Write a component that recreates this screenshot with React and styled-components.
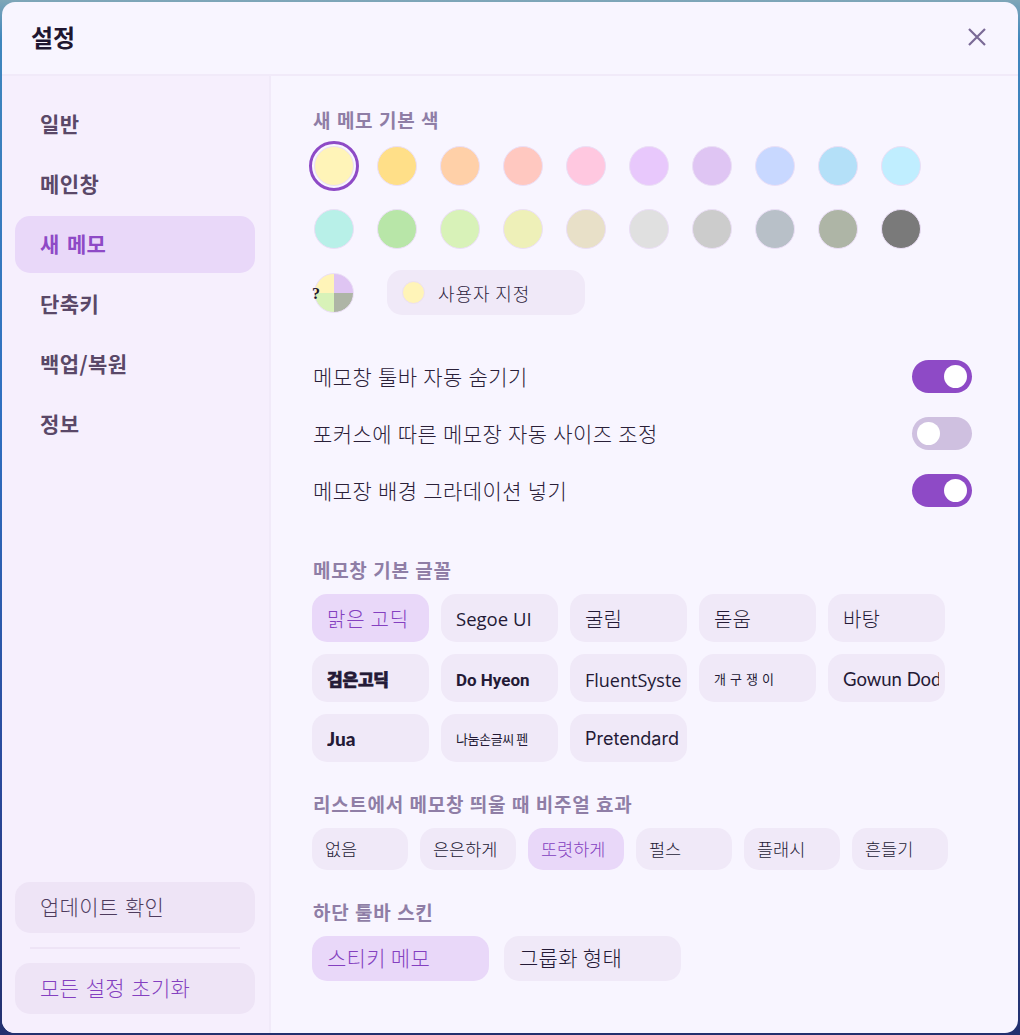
import React from "react";
import styled, { createGlobalStyle } from "styled-components";

const KR = `"Noto Sans CJK KR", "Noto Sans", sans-serif`;

const Global = createGlobalStyle`
  html, body { margin: 0; padding: 0; }
  body {
    height: 1035px;
    overflow: hidden;
    font-family: ${KR};
    background:
      linear-gradient(180deg, #7fa6b8 0, #3f86bd 40px, #2f6fc0 40%, #2a4a9c 75%, #23306e 100%);
  }
  * { box-sizing: border-box; }
`;

const Stage = styled.div`
  height: 1035px;
  padding: 2px;
`;
const Win = styled.div`
  height: 1031px;
  background: #f8f5ff;
  border-radius: 13px;
  display: flex;
  flex-direction: column;
  overflow: hidden;
`;
const Header = styled.header`
  height: 74px;
  flex: none;
  display: flex;
  align-items: center;
  justify-content: space-between;
  padding: 0 32px 3px 29px;
  border-bottom: 2px solid #f1eaf9;
`;
const Title = styled.h1`
  margin: 0;
  font-size: 24px;
  line-height: 32px;
  font-weight: 700;
  color: #1f1630;
`;
const CloseBtn = styled.button`
  border: 0;
  padding: 0;
  background: none;
  width: 18px;
  height: 18px;
  display: block;
  color: #7a6a96;
  & svg { display: block; }
`;
const Body = styled.div`
  flex: 1;
  display: flex;
  min-height: 0;
`;
const Side = styled.aside`
  width: 269px;
  flex: none;
  background: #f6effd;
  border-right: 2px solid #f1eaf9;
  padding: 20px 14px 19px 13px;
  display: flex;
  flex-direction: column;
`;
const Nav = styled.nav`
  display: flex;
  flex-direction: column;
  gap: 3px;
`;
const NavItem = styled.div`
  height: 57px;
  border-radius: 15px;
  padding: 0 25px 4px;
  display: flex;
  align-items: center;
  font-size: 21px;
  font-weight: 700;
  letter-spacing: 0.4px;
  word-spacing: 2px;
  color: ${p => (p.$active ? "#8e4ac6" : "#5a4868")};
  background: ${p => (p.$active ? "#e9d8f9" : "transparent")};
`;
const SideFoot = styled.div`
  margin-top: auto;
  display: flex;
  flex-direction: column;
`;
const SideBtn = styled.div`
  height: 51px;
  border-radius: 15px;
  padding: 0 25px 4px;
  display: flex;
  align-items: center;
  font-size: 21px;
  font-weight: 300;
  letter-spacing: 0.3px;
  word-spacing: 1.5px;
  background: #eee4f6;
  color: ${p => (p.$accent ? "#8440c0" : "#4e3c5e")};
`;
const Divider = styled.div`
  height: 2px;
  margin: 14px 15px;
  background: #eee4f6;
`;
const Main = styled.main`
  flex: 1;
  padding: 31px 0 0 41px;
  min-width: 0;
`;
const Label = styled.div`
  margin-left: 1px;
  font-size: 19px;
  line-height: 26px;
  font-weight: 700;
  color: #8f7ea6;
  letter-spacing: 0.7px;
  word-spacing: 0.7px;
  margin-top: ${p => p.$top || 0}px;
`;
const Palette = styled.div`
  margin: 13px 0 0 2px;
  display: grid;
  grid-template-columns: repeat(10, 40px);
  column-gap: 23px;
  row-gap: 23px;
`;
const Swatch = styled.div`
  width: 40px;
  height: 40px;
  border-radius: 50%;
  border: 1px solid #ebdff6;
  background: ${p => p.$c};
  ${p => p.$sel && `outline: 3px solid #8e4ac6; outline-offset: 2px;`}
`;
const CustomRow = styled.div`
  margin: 21px 0 0 2px;
  height: 45px;
  display: flex;
  align-items: center;
  gap: 33px;
`;
const MixSwatch = styled.div`
  position: relative;
  width: 40px;
  height: 40px;
  border-radius: 50%;
  border: 1px solid #ebdff6;
  background: conic-gradient(#dfc5f3 0 25%, #aeb5a6 0 50%, #d8f2b8 0 75%, #fff4b8 0);
`;
const Question = styled.span`
  position: absolute;
  left: -3px;
  top: 10px;
  font: 700 16px/20px "Liberation Serif", serif;
  color: #1f1630;
`;
const CustomBtn = styled.div`
  width: 198px;
  height: 45px;
  border-radius: 15px;
  background: #f0e9f8;
  display: flex;
  align-items: center;
  gap: 13px;
  padding: 0 15px;
  font-size: 18px;
  font-weight: 300;
  letter-spacing: 0.9px;
  color: #2f2540;
`;
const CustomDot = styled.span`
  width: 23px;
  height: 23px;
  border-radius: 50%;
  background: #fff4b8;
  border: 1px solid #ebdff6;
`;
const Toggles = styled.div`
  margin: 45px 46px 0 1px;
  display: flex;
  flex-direction: column;
  gap: 24px;
`;
const ToggleRow = styled.div`
  height: 33px;
  display: flex;
  align-items: center;
  justify-content: space-between;
`;
const RowText = styled.span`
  margin-bottom: 2px;
  font-size: 21px;
  font-weight: 300;
  letter-spacing: 0.4px;
  word-spacing: 0.8px;
  color: #2a2038;
`;
const Toggle = styled.span`
  width: 60px;
  height: 33px;
  border-radius: 17px;
  padding: 5px;
  display: flex;
  justify-content: ${p => (p.$on ? "flex-end" : "flex-start")};
  background: ${p => (p.$on ? "#8e4ac6" : "#cfc0e0")};
  &::after {
    content: "";
    width: 23px;
    height: 23px;
    border-radius: 50%;
    background: #fff;
  }
`;
const Chips = styled.div`
  margin-top: ${p => p.$top}px;
  display: grid;
  grid-template-columns: repeat(auto-fill, ${p => p.$w}px);
  gap: 12px;
  margin-right: 10px;
`;
const Chip = styled.div`
  height: ${p => p.$h}px;
  width: ${p => (p.$width ? `${p.$width}px` : "auto")};
  border-radius: 15px;
  padding: ${p => p.$pt || 0}px ${p => p.$pr ?? p.$px}px ${p => p.$pb || 0}px ${p => p.$px}px;
  display: flex;
  align-items: center;
  background: ${p => (p.$active ? "#e9d8f9" : "#f0e9f8")};
  color: ${p => (p.$active ? "#8440c0" : "#241a36")};
  font-family: ${p => p.$font || KR};
  font-size: ${p => p.$size}px;
  font-weight: ${p => p.$weight || 300};
  letter-spacing: ${p => p.$ls || 0}px;
  ${p => p.$heavy && `-webkit-text-stroke: 0.7px currentColor;`}
  overflow: hidden;
  white-space: nowrap;
`;
const ChipText = styled.span`
  display: block;
  width: 100%;
  overflow: hidden;
`;
const SkinRow = styled.div`
  margin-top: 11px;
  display: flex;
  gap: 15px;
`;

const row1 = ["#fff4b8", "#ffdf88", "#ffd0a8", "#ffc8c0", "#ffc8e0", "#e8c8fc", "#dfc5f3", "#c8d8ff", "#b4e0f8", "#c0eeff"];
const row2 = ["#b8f0e8", "#b8e6a8", "#d8f2b8", "#eef0b8", "#e8e0c8", "#e0e0e0", "#cccccc", "#b8c0c8", "#aeb5a6", "#7a7a7a"];

const fonts = [
  { t: "맑은 고딕", active: true, ls: 0.8 },
  { t: "Segoe UI", font: `"Open Sans", sans-serif`, size: 18.5, weight: 400 },
  { t: "굴림" },
  { t: "돋움" },
  { t: "바탕" },
  { t: "검은고딕", size: 17, weight: 900, ls: -0.2, heavy: true },
  { t: "Do Hyeon", font: `"Roboto", sans-serif`, size: 17, weight: 700, pt: 4 },
  { t: "FluentSystemIcons", font: `"Open Sans", sans-serif`, size: 18, weight: 400, pt: 3 },
  { t: "개구쟁이", size: 13, ls: 4, weight: 400 },
  { t: "Gowun Dodum", font: `"Lato", sans-serif`, size: 18.5, weight: 400, pt: 2 },
  { t: "Jua", font: `"Lato", sans-serif`, size: 19, weight: 900 },
  { t: "나눔손글씨 펜", size: 13, ls: -0.4, weight: 400 },
  { t: "Pretendard", font: `"Inter", sans-serif`, size: 18, weight: 400 },
];
const effects = ["없음", "은은하게", "또렷하게", "펄스", "플래시", "흔들기"];

export default function App() {
  return (
    <Stage>
      <Global />
      <Win>
        <Header>
          <Title>설정</Title>
          <CloseBtn aria-label="닫기">
            <svg width="18" height="18" viewBox="0 0 18 18" fill="none" stroke="currentColor" strokeWidth="2.2">
              <path d="M1 1 L17 17 M17 1 L1 17" />
            </svg>
          </CloseBtn>
        </Header>
        <Body>
          <Side>
            <Nav>
              <NavItem>일반</NavItem>
              <NavItem>메인창</NavItem>
              <NavItem $active>새 메모</NavItem>
              <NavItem>단축키</NavItem>
              <NavItem>백업/복원</NavItem>
              <NavItem>정보</NavItem>
            </Nav>
            <SideFoot>
              <SideBtn>업데이트 확인</SideBtn>
              <Divider />
              <SideBtn $accent>모든 설정 초기화</SideBtn>
            </SideFoot>
          </Side>
          <Main>
            <Label>새 메모 기본 색</Label>
            <Palette>
              {row1.map((c, i) => <Swatch key={c} $c={c} $sel={i === 0} />)}
              {row2.map(c => <Swatch key={c} $c={c} />)}
            </Palette>
            <CustomRow>
              <MixSwatch><Question>?</Question></MixSwatch>
              <CustomBtn><CustomDot />사용자 지정</CustomBtn>
            </CustomRow>
            <Toggles>
              <ToggleRow><RowText>메모창 툴바 자동 숨기기</RowText><Toggle $on /></ToggleRow>
              <ToggleRow><RowText>포커스에 따른 메모장 자동 사이즈 조정</RowText><Toggle /></ToggleRow>
              <ToggleRow><RowText>메모장 배경 그라데이션 넣기</RowText><Toggle $on /></ToggleRow>
            </Toggles>
            <Label $top={50}>메모창 기본 글꼴</Label>
            <Chips $top={11} $w={117}>
              {fonts.map(f => (
                <Chip key={f.t} $h={48} $px={15} $pr={6} $pt={f.pt} $active={f.active} $font={f.font} $size={f.size || 20} $weight={f.weight} $ls={f.ls} $heavy={f.heavy}>
                  <ChipText>{f.t}</ChipText>
                </Chip>
              ))}
            </Chips>
            <Label $top={29}>리스트에서 메모창 띄울 때 비주얼 효과</Label>
            <Chips $top={11} $w={96}>
              {effects.map((e, i) => (
                <Chip key={e} $h={42} $px={13} $pb={2} $size={17.5} $active={i === 2}>{e}</Chip>
              ))}
            </Chips>
            <Label $top={29}>하단 툴바 스킨</Label>
            <SkinRow>
              <Chip $width={177} $h={45} $px={15} $pb={4} $size={21} $ls={0.3} $active>스티키 메모</Chip>
              <Chip $width={177} $h={45} $px={15} $pb={4} $size={21} $ls={0.3}>그룹화 형태</Chip>
            </SkinRow>
          </Main>
        </Body>
      </Win>
    </Stage>
  );
}
